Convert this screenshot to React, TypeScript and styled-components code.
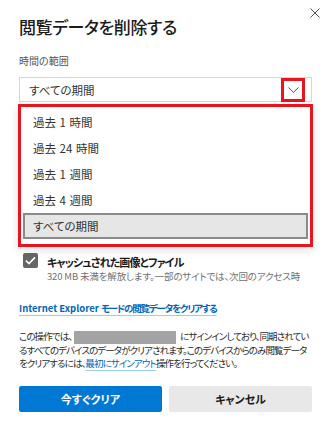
import React from "react";
import styled, { createGlobalStyle } from "styled-components";

const GlobalStyle = createGlobalStyle`
  html, body { margin: 0; padding: 0; background: #ffffff; }
  body {
    font-family: "Noto Sans CJK JP", "Noto Sans", sans-serif;
    font-feature-settings: "palt";
    color: #1a1a1a;
  }
  * { box-sizing: border-box; }
`;

const Dialog = styled.div`
  width: 330px;
  height: 430px;
  padding: 0 18px 0 19px;
  display: flex;
  flex-direction: column;
  background: #ffffff;
`;

const Header = styled.div`
  display: flex;
  justify-content: space-between;
  align-items: flex-start;
  padding-top: 8px;
`;

const Title = styled.h1`
  margin: 7px 0 0 0;
  font-size: 17px;
  line-height: 24px;
  font-weight: 500;
  color: #1b1b1b;
  letter-spacing: -0.4px;
`;

const CloseButton = styled.button`
  width: 10px;
  height: 10px;
  margin-right: -8px;
  padding: 0;
  border: none;
  background: none;
  display: flex;
`;

const FieldLabel = styled.div`
  margin-top: 14px;
  font-size: 10px;
  line-height: 16px;
  color: #555555;
`;

const SelectWrap = styled.div`
  position: relative;
  margin-top: 8px;
`;

const Select = styled.div`
  position: relative;
  height: 25px;
  border: 1px solid #d6d6d6;
  display: flex;
  align-items: center;
  padding-left: 9px;
  font-size: 11.5px;
  color: #333333;
`;

const ChevronBox = styled.div`
  position: absolute;
  right: 6px;
  top: 0px;
  width: 24px;
  height: 24px;
  border: 3px solid #e8141e;
  display: flex;
  align-items: center;
  justify-content: center;
`;

const Menu = styled.div`
  position: absolute;
  z-index: 2;
  top: calc(100% + 2px);
  left: -1px;
  right: -1px;
  background: #ffffff;
  border: 3px solid #e8141e;
  padding: 2px 2px 5px;
  box-shadow: 0 3px 9px rgba(0, 0, 0, 0.13);
`;

const MenuItem = styled.div<{ $selected?: boolean }>`
  height: 26px;
  display: flex;
  align-items: center;
  padding-left: 8px;
  font-size: 11.5px;
  color: #333333;
  word-spacing: 1px;
  border: 2px solid ${(p) => (p.$selected ? "#8a8a8a" : "transparent")};
  background: ${(p) => (p.$selected ? "#e6e6e6" : "transparent")};
`;

const List = styled.div`
  height: 182px;
  padding-top: 151px;
  display: flex;
  flex-direction: column;
`;

const CheckRow = styled.div`
  display: flex;
  align-items: flex-start;
  padding-left: 4px;
  gap: 9px;
`;

const CheckBox = styled.div`
  width: 15px;
  height: 15px;
  flex-shrink: 0;
  border-radius: 2px;
  background: #666666;
  display: flex;
  align-items: center;
  justify-content: center;
`;

const CheckText = styled.div`
  display: flex;
  flex-direction: column;
  padding-top: 2px;
`;

const CheckLabel = styled.div`
  font-size: 11px;
  line-height: 15px;
  font-weight: 700;
  color: #1a1a1a;
  letter-spacing: -0.9px;
`;

const CheckDesc = styled.div`
  font-size: 9.5px;
  line-height: 13px;
  color: #707070;
  white-space: nowrap;
  letter-spacing: -0.15px;
`;

const IELink = styled.a`
  margin-top: 16px;
  font-size: 9.5px;
  line-height: 16px;
  font-weight: 700;
  color: #0067b8;
  text-decoration: underline;
  text-decoration-color: #9ccbf0;
  text-decoration-thickness: 1px;
  text-underline-offset: 3px;
  align-self: flex-start;
  white-space: nowrap;
`;

const Kana = styled.span`
  letter-spacing: -1.2px;
`;

const Para = styled.p`
  margin: 14px 0 0 0;
  font-size: 9.5px;
  line-height: 13px;
  color: #2b2b2b;
  white-space: nowrap;
  letter-spacing: -0.9px;
`;

const Redacted = styled.span`
  display: inline-block;
  width: 102px;
  height: 13px;
  margin: 0 4px 0 2px;
  background: #a3a3a3;
  vertical-align: -4px;
`;

const InlineLink = styled.a`
  color: #0067b8;
  text-decoration: underline;
  text-decoration-color: #9ccbf0;
  text-underline-offset: 3px;
`;

const Buttons = styled.div`
  margin-top: 16px;
  display: grid;
  grid-template-columns: 1fr 1fr;
  gap: 7px;
`;

const Button = styled.button<{ $primary?: boolean }>`
  height: 26px;
  border: none;
  border-radius: 2px;
  font-family: inherit;
  font-feature-settings: "palt";
  font-size: 11px;
  font-weight: 700;
  background: ${(p) => (p.$primary ? "#0078d4" : "#e8e8e8")};
  color: ${(p) => (p.$primary ? "#ffffff" : "#1a1a1a")};
`;

const CheckIcon = () => (
  <svg width="11" height="9" viewBox="0 0 11 9">
    <path d="M1 4.6 L4 7.6 L10 1.4" fill="none" stroke="#ffffff" strokeWidth="1.6" />
  </svg>
);

export default function App() {
  const options = ["過去 1 時間", "過去 24 時間", "過去 1 週間", "過去 4 週間", "すべての期間"];
  return (
    <>
      <GlobalStyle />
      <Dialog>
        <Header>
          <Title>閲覧データを削除する</Title>
          <CloseButton aria-label="閉じる">
            <svg width="10" height="10" viewBox="0 0 10 10">
              <path d="M0.5 0.5 L9.5 9.5 M9.5 0.5 L0.5 9.5" stroke="#555555" strokeWidth="1" />
            </svg>
          </CloseButton>
        </Header>
        <FieldLabel>時間の範囲</FieldLabel>
        <SelectWrap>
          <Select>
            すべての期間
            <ChevronBox>
              <svg width="11" height="6" viewBox="0 0 11 6">
                <path d="M0.5 0.5 L5.5 5.3 L10.5 0.5" fill="none" stroke="#555555" strokeWidth="1" />
              </svg>
            </ChevronBox>
          </Select>
          <Menu>
            {options.map((o, i) => (
              <MenuItem key={o} $selected={i === options.length - 1}>
                {o}
              </MenuItem>
            ))}
          </Menu>
        </SelectWrap>
        <List>
          <CheckRow>
            <CheckBox>
              <CheckIcon />
            </CheckBox>
            <CheckText>
              <CheckLabel>キャッシュされた画像とファイル</CheckLabel>
              <CheckDesc>320 MB 未満を解放します。一部のサイトでは、次回のアクセス時</CheckDesc>
            </CheckText>
          </CheckRow>
        </List>
        <IELink href="#">
          Internet Explorer <Kana>モードの閲覧データをクリアする</Kana>
        </IELink>
        <Para>
          この操作では、
          <Redacted />
          にサインインしており、同期されてい
          <br />
          るすべてのデバイスのデータがクリアされます。このデバイスからのみ閲覧データ
          <br />
          をクリアするには、<InlineLink href="#">最初にサインアウト</InlineLink>操作を行ってください。
        </Para>
        <Buttons>
          <Button $primary>今すぐクリア</Button>
          <Button>キャンセル</Button>
        </Buttons>
      </Dialog>
    </>
  );
}
